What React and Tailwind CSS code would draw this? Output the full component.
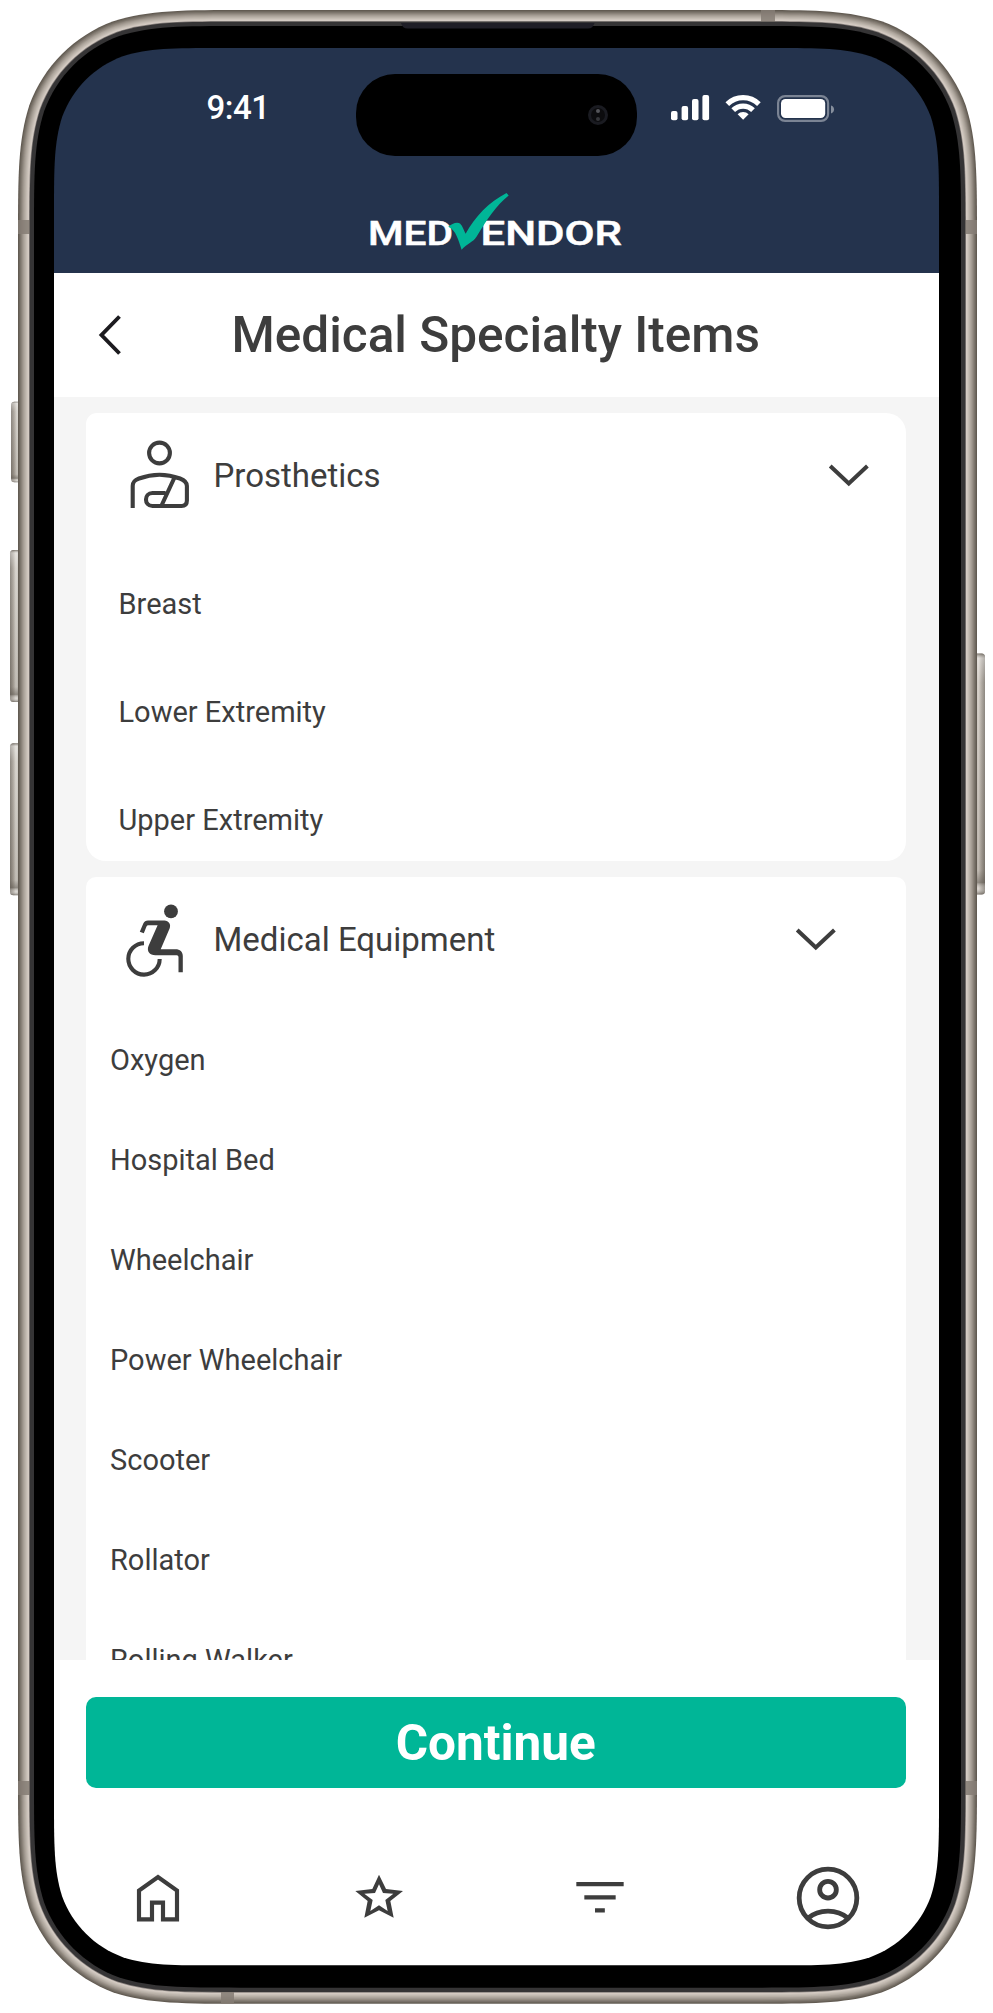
import React from "react";

const CORNER = [
  [1.52866483, 0], [1.08849299, 0], [0.86840701, 0], [0.63149399, 0.074911],
  [0.37282401, 0.16906], [0.16906, 0.37282401], [0.074911, 0.63149399],
  [0, 0.86840701], [0, 1.08849299], [0, 1.52866483],
];

// Continuous-corner rounded rectangle as an SVG path.
function squircle(x0, y0, x1, y1, r) {
  const tl = CORNER.map(([a, b]) => [x0 + a * r, y0 + b * r]).reverse();
  const tr = CORNER.map(([a, b]) => [x1 - a * r, y0 + b * r]);
  const br = CORNER.map(([a, b]) => [x1 - a * r, y1 - b * r]).reverse();
  const bl = CORNER.map(([a, b]) => [x0 + a * r, y1 - b * r]);
  return (
    [tl, tr, br, bl]
      .map((p, i) => {
        const s = p.map((q) => q.map((n) => n.toFixed(2)).join(" "));
        return `${i ? "L" : "M"}${s[0]}C${s[1]} ${s[2]} ${s[3]}C${s[4]} ${s[5]} ${s[6]}C${s[7]} ${s[8]} ${s[9]}`;
      })
      .join("") + "Z"
  );
}

const inset = (d) => squircle(18 + d, 10 + d, 977 - d, 2003.7 - d, 151 - d);
const SCREEN = squircle(54, 48, 939, 1965.3, 109);

const METAL = [
  [0, "#625b52"], [1, "#6f685f"], [2, "#7c756c"], [3, "#8a8279"], [4, "#989087"], [5, "#a59d94"],
  [6, "#b0a89f"], [7, "#bab2a9"], [8, "#c4bcb3"], [9, "#cec5bd"], [10, "#d4cbc3"], [11, "#8b8480"],
];

function DeviceFrame() {
  return (
    <svg className="pointer-events-none absolute inset-0" width="993" height="2013" viewBox="0 0 993 2013">
      <defs>
        <linearGradient id="key" x1="0" x2="1" y1="0" y2="0">
          <stop offset="0" stopColor="#7b756d" />
          <stop offset="0.25" stopColor="#a39c93" />
          <stop offset="0.5" stopColor="#d5d1ca" />
          <stop offset="1" stopColor="#aaa49c" />
        </linearGradient>
        <linearGradient id="keyRight" x1="1" x2="0" y1="0" y2="0">
          <stop offset="0" stopColor="#7b756d" />
          <stop offset="0.25" stopColor="#a39c93" />
          <stop offset="0.5" stopColor="#d0c9c1" />
          <stop offset="1" stopColor="#b5aea6" />
        </linearGradient>
        <linearGradient id="shade" x1="0" x2="0" y1="0" y2="1">
          <stop offset="0" stopColor="#5d574f" />
          <stop offset="0.02" stopColor="#ffffff" stopOpacity="0.6" />
          <stop offset="0.12" stopColor="#ffffff" stopOpacity="0.2" />
          <stop offset="0.9" stopColor="#5d574f" stopOpacity="0.2" />
          <stop offset="0.95" stopColor="#5d574f" stopOpacity="0.8" />
          <stop offset="0.975" stopColor="#ffffff" stopOpacity="0.3" />
          <stop offset="1" stopColor="#5d574f" />
        </linearGradient>
        <mask id="cut">
          <rect width="993" height="2013" fill="white" />
          <path d={SCREEN} fill="black" />
        </mask>
      </defs>
      {[[11, 401.7, 80.6], [10, 550, 152], [10, 743.3, 152]].map(([x, y, h]) => (
        <g key={y}>
          <rect x={x} y={y} width={12} height={h} rx="3.5" fill="url(#key)" />
          <rect x={x} y={y} width={12} height={h} rx="3.5" fill="url(#shade)" opacity="0.7" />
        </g>
      ))}
      <rect x="972" y="653.5" width="13" height="241" rx="3.5" fill="url(#keyRight)" />
      <rect x="972" y="653.5" width="13" height="241" rx="3.5" fill="url(#shade)" opacity="0.7" />
      <g mask="url(#cut)">
        {METAL.map(([d, c]) => (
          <path key={d} d={inset(d)} fill={c} />
        ))}
        <g fill="#857d74" fillOpacity="0.85">
          <rect x="18" y="220" width="12" height="14" />
          <rect x="965" y="220" width="12" height="14" />
          <rect x="18" y="1781" width="12" height="14" />
          <rect x="965" y="1781" width="12" height="14" />
          <rect x="761" y="10" width="14" height="12" />
          <rect x="221" y="1992" width="13" height="11.7" />
        </g>
        <path d={inset(11.7)} fill="#353435" />
        <path d={inset(16)} fill="#000000" />
        <path d="M401 23H594.5Q593 28.6 588 28.6H407.5Q402.5 28.6 401 23Z" fill="#1f1e26" />
      </g>
    </svg>
  );
}

function StatusBar() {
  return (
    <div className="flex h-[118px] items-start pt-[36px]">
      <div className="w-[302px] pl-[152.5px] text-[33px] font-medium leading-[47px] tracking-[-0.5px] text-white">9:41</div>
      <div className="relative -mt-[10.5px] h-[82.5px] w-[281px] rounded-[39px] bg-black">
        <div className="absolute left-[232px] top-[31px] flex size-5 flex-col items-center justify-center gap-1 rounded-full border-[3px] border-[#1a1b21] bg-[#0c0c0e]">
          <span className="size-1 rounded-full bg-[#55565a]" />
          <span className="size-1 rounded-full bg-[#36373a]" />
        </div>
      </div>
      <svg className="ml-[34px] mt-[9px]" width="164" height="32" viewBox="671 93 164 32" fill="white">
        <rect x="671" y="111" width="6.5" height="9.2" rx="2" />
        <rect x="681.6" y="106" width="6.5" height="14.2" rx="2" />
        <rect x="692" y="99" width="6.5" height="21.2" rx="2" />
        <rect x="702.4" y="95" width="6.7" height="25.2" rx="2" />
        <g fill="none" stroke="white" strokeWidth="5.2">
          <path d="M727.3 104.2A22.5 22.5 0 0 1 758.9 104.2" />
          <path d="M733.2 110.2A14 14 0 0 1 753 110.2" />
        </g>
        <path d="M743.1 119.8L737.6 114.2A8 8 0 0 1 748.6 114.2Z" />
        <rect x="778.1" y="96.1" width="50" height="24.8" rx="7" fill="none" stroke="#fff" strokeOpacity="0.4" strokeWidth="2.2" />
        <rect x="781" y="99" width="44.2" height="19" rx="4.5" />
        <path d="M831 105.5Q834 106.5 834 109.3Q834 112.5 831 113.5Z" fillOpacity="0.45" />
      </svg>
    </div>
  );
}

function Logo() {
  return (
    <svg className="ml-[315px] mt-[26px]" width="254" height="60" viewBox="369 192 254 60">
      <g fill="white" stroke="white" strokeWidth="0.5" fontFamily="Roboto, sans-serif" fontWeight="500" fontSize="32.5">
        <text x="368" y="245.2" textLength="85" lengthAdjust="spacingAndGlyphs">MED</text>
        <text x="480.5" y="245.2" textLength="141.5" lengthAdjust="spacingAndGlyphs">ENDOR</text>
      </g>
      <path
        fill="#00b697"
        d="M448.3 226.8C451.5 223.5 457 221.6 460 223.4C462.8 226 464.2 231 465.6 233.8C475 216.5 489 202 506.500 193L508.7 195.4C496 205.5 487 219.5 476.500 236.8C473.5 242 466.5 244 461.6 249.8C458.8 241 456 230 448.3 226.8Z"
      />
    </svg>
  );
}

function Chevron({ className }) {
  return (
    <svg className={className} width="42" height="26" viewBox="0 0 42 26" fill="none" stroke="#3d3d3d" strokeWidth="4">
      <path d="M2.2 3L20.8 20.5L39.4 3" />
    </svg>
  );
}

function ProstheticsIcon() {
  return (
    <svg width="62" height="72" viewBox="129 439 62 72" fill="none" stroke="#3d3d3d" strokeWidth="4.1">
      <circle cx="159.5" cy="453" r="10.4" />
      <path d="M132.7 508V486C132.7 481.5 135 480 139 478.5C152 473.8 167 473.8 180 478.5C184 480 186.9 482 186.9 486V500.5C186.9 504 185 506 181.5 506H152.5C143.8 506 143.8 493 152.5 493H165.5M174.5 477.5L161.3 506" />
    </svg>
  );
}

function WheelchairIcon() {
  return (
    <svg width="62" height="76" viewBox="123 901 62 76" fill="#3d3d3d">
      <circle cx="171" cy="911.4" r="6.9" />
      <path d="M139.8 931.8L143.3 923.6Q144.6 920.6 148 920.6H164.5C168.5 920.6 171.3 924.5 169.7 928.3L160.7 949.2H175.5C180 949.2 182.8 951.8 182.8 956V972.2H178.5V957Q178.5 955.3 176.8 955.3H155.5C149.5 955.3 146.5 951 148.5 946L157.6 925.2H148.3Q147 925.2 146.5 926.5L143.8 933.2Z" />
      <path d="M144 943.2A15.7 15.7 0 1 0 159.7 959" fill="none" stroke="#3d3d3d" strokeWidth="4.1" />
    </svg>
  );
}

function ItemList({ items, className }) {
  return (
    <ul className="text-[29px]">
      {items.map((t) => (
        <li key={t} className={className}>{t}</li>
      ))}
    </ul>
  );
}

export default function App() {
  return (
    <div className="relative h-[2013px] w-[993px] overflow-hidden bg-white px-[54px] pt-12 font-[Roboto,sans-serif] text-[#3d3d3d]">
      <div className="flex h-[1917px] w-[885px] flex-col overflow-hidden rounded-[100px] bg-white">
        <header className="h-[224.5px] shrink-0 bg-[#24334d]">
          <StatusBar />
          <Logo />
        </header>

        <div className="flex h-[124.5px] shrink-0 items-center bg-white">
          <svg className="ml-[43px]" width="26" height="42" viewBox="0 0 26 42" fill="none" stroke="#1c1b1f" strokeWidth="3.9">
            <path d="M22.5 2.5L4.5 21L22.5 39.5" />
          </svg>
          <h1 className="ml-[108.5px] pt-[2px] text-[49.5px] font-medium leading-none">Medical Specialty Items</h1>
        </div>

        <main className="flex h-[1263px] shrink-0 flex-col gap-4 overflow-hidden bg-[#f5f5f5] pl-[31.5px] pr-[33px] pt-4">
          <section className="h-[448px] shrink-0 rounded-[20px] rounded-tl-[11px] bg-white">
            <div className="flex h-[137.5px] items-start pl-[43px]">
              <div className="mt-[26px]"><ProstheticsIcon /></div>
              <h2 className="ml-[23px] mt-[39px] text-[33px] leading-[48px]">Prosthetics</h2>
              <Chevron className="ml-auto mr-[36.5px] mt-[50px]" />
            </div>
            <ItemList items={["Breast", "Lower Extremity", "Upper Extremity"]} className="flex h-[108px] items-center pl-[33px]" />
          </section>

          <section className="h-[900px] shrink-0 rounded-[10px] bg-white">
            <div className="flex h-[133.5px] items-start pl-[37.5px]">
              <div className="mt-[24px]"><WheelchairIcon /></div>
              <h2 className="ml-[28.5px] mt-[39px] text-[33px] leading-[48px]">Medical Equipment</h2>
              <Chevron className="ml-auto mr-[69.5px] mt-[49.5px]" />
            </div>
            <ItemList
              items={["Oxygen", "Hospital Bed", "Wheelchair", "Power Wheelchair", "Scooter", "Rollator", "Rolling Walker"]}
              className="flex h-[100px] items-center pl-[24.5px]"
            />
          </section>
        </main>

        <div className="shrink-0 bg-white pl-[31.5px] pr-[33px] pt-[37px]">
          <button className="block h-[91px] w-full rounded-[10px] bg-[#00b697] text-[49.5px] font-bold leading-[92px] text-white">
            Continue
          </button>
        </div>

        <nav className="flex h-[177px] shrink-0 items-center justify-between pl-[80px] pr-[78px] pt-[42px]">
          <svg width="48" height="50" viewBox="402 698 144 150" fill="none" stroke="#3d3d3d" strokeWidth="12.5">
            <path d="M417 837V751L474 710.5L531 751V837H489V787H456V837Z" />
          </svg>
          <svg className="ml-[2px]" width="50" height="50" viewBox="72 580 150 150" fill="#3d3d3d" fillRule="evenodd">
            <path d="M147 585L168 628L219 634L181 664L191 714L147 692L103 714L113 664L76 634L127 628ZM147 614L159 640L190 642L166 661L173 694L147 677L121 694L128 661L103 642L135 640Z" />
          </svg>
          <svg className="ml-[1px]" width="50" height="50" viewBox="736 579 150 150" fill="#3d3d3d">
            <path d="M740 606H882V619H740ZM764 645.5H858V658.5H764ZM796 684.5H825.5V697.5H796Z" />
          </svg>
          <svg width="66" height="66" viewBox="404 673 198 198" fill="none" stroke="#3d3d3d" strokeWidth="14.5">
            <circle cx="503" cy="772" r="86.5" />
            <circle cx="503" cy="747" r="25" />
            <path d="M442 833C476 804 530 804 564 833" />
          </svg>
        </nav>
      </div>
      <DeviceFrame />
    </div>
  );
}
